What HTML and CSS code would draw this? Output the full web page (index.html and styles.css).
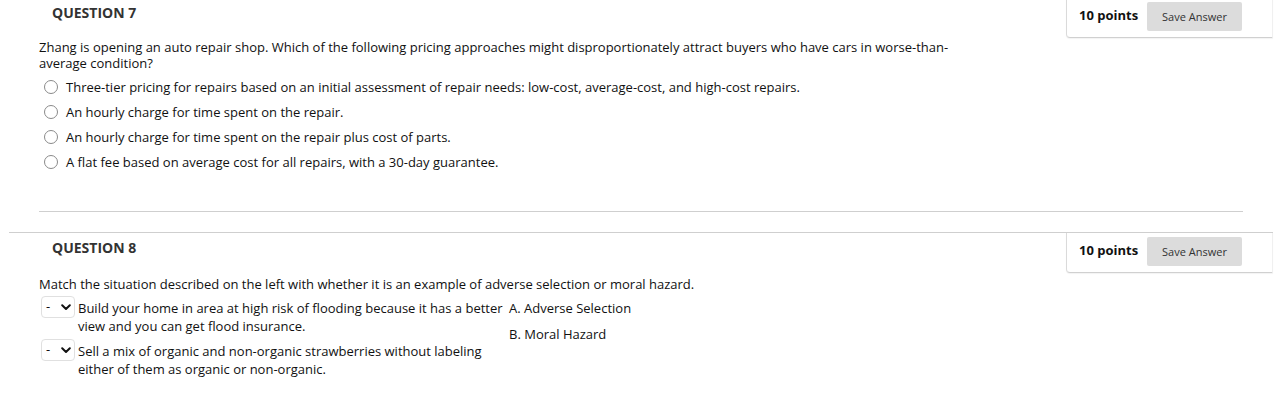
FILE: index.html
```html
<!DOCTYPE html>
<html>
<head>
<meta charset="utf-8">
<link rel="stylesheet" href="styles.css">
</head>
<body>
<div class="question q-first">
  <div class="q-head">
    <h3 class="q-title">QUESTION 7</h3>
    <div class="points-box">
      <span class="points">10 points</span>
      <button class="save">Save Answer</button>
    </div>
  </div>
  <div class="q-body">
    <p class="prompt">Zhang is opening an auto repair shop. Which of the following pricing approaches might disproportionately attract buyers who have cars in worse-than-average condition?</p>
    <ul class="options">
      <li><span class="radio"></span>Three-tier pricing for repairs based on an initial assessment of repair needs: low-cost, average-cost, and high-cost repairs.</li>
      <li><span class="radio"></span>An hourly charge for time spent on the repair.</li>
      <li><span class="radio"></span>An hourly charge for time spent on the repair plus cost of parts.</li>
      <li><span class="radio"></span>A flat fee based on average cost for all repairs, with a 30-day guarantee.</li>
    </ul>
    <div class="separator"></div>
  </div>
</div>
<div class="question">
  <div class="q-head">
    <h3 class="q-title">QUESTION 8</h3>
    <div class="points-box">
      <span class="points">10 points</span>
      <button class="save">Save Answer</button>
    </div>
  </div>
  <div class="q-body">
    <p class="prompt prompt-match">Match the situation described on the left with whether it is an example of adverse selection or moral hazard.</p>
    <div class="match">
      <div class="match-left">
        <div class="match-row">
          <div class="fake-select"><span class="dash">-</span><svg class="chev" width="10" height="7" viewBox="0 0 10 7"><path d="M1.2 1.3 L5 5 L8.8 1.3" fill="none" stroke="#111" stroke-width="2" stroke-linecap="round" stroke-linejoin="round"/></svg></div>
          <div class="match-text">Build your home in area at high risk of flooding because it has a better view and you can get flood insurance.</div>
        </div>
        <div class="match-row">
          <div class="fake-select"><span class="dash">-</span><svg class="chev" width="10" height="7" viewBox="0 0 10 7"><path d="M1.2 1.3 L5 5 L8.8 1.3" fill="none" stroke="#111" stroke-width="2" stroke-linecap="round" stroke-linejoin="round"/></svg></div>
          <div class="match-text">Sell a mix of organic and non-organic strawberries without labeling either of them as organic or non-organic.</div>
        </div>
      </div>
      <ul class="match-right">
        <li>A. Adverse Selection</li>
        <li>B. Moral Hazard</li>
      </ul>
    </div>
  </div>
</div>
</body>
</html>
```
FILE: styles.css
```css
html, body {
  margin: 0;
  padding: 0;
  background: #fff;
}
body {
  font-family: "Open Sans", "DejaVu Sans", sans-serif;
  font-size: 13px;
  color: #111;
}
.question {
  margin: 0 10px 0 9px;
  border-top: 1px solid #cfcfcf;
}
.q-first {
  margin-top: -3px;
}
.q-head {
  display: flex;
  justify-content: space-between;
  align-items: flex-start;
}
.q-title {
  margin: 0;
  padding: 5px 0 0 43px;
  font-size: 14px;
  font-weight: 700;
  color: #333;
  line-height: 20px;
}
.points-box {
  display: flex;
  align-items: center;
  gap: 10px;
  padding: 4px 30px 6px 12px;
  border-left: 1px solid #dadada;
  border-bottom: 1px solid #d0d0d0;
  border-right: 1px solid #f0f0f0;
  border-bottom-left-radius: 4px;
  box-shadow: 0 1px 1px rgba(0,0,0,0.05);
}
.points {
  font-weight: 700;
  font-size: 13px;
  color: #111;
  white-space: nowrap;
  width: 58px;
  margin-top: -4px;
}
.save {
  width: 95px;
  height: 29px;
  border: none;
  border-radius: 2px;
  background: #dcdcdc;
  color: #333;
  font-family: "Open Sans", "DejaVu Sans", sans-serif;
  font-size: 11px;
  padding: 0;
}
.q-body {
  padding: 0 0 0 30px;
}
.prompt {
  margin: 1px 0 0 0;
  width: 916px;
  line-height: 16px;
}
.prompt-match {
  margin-top: 3px;
}
.options {
  list-style: none;
  margin: 3px 0 0 0;
  padding: 0;
}
.options li {
  display: flex;
  align-items: center;
  height: 25px;
  line-height: 16px;
}
.radio {
  box-sizing: border-box;
  width: 14px;
  height: 14px;
  border: 1px solid #8a8a8a;
  border-radius: 50%;
  margin: 0 8px 0 5px;
  flex: none;
}
.separator {
  margin: 37px 30px 0 0;
  border-top: 1px solid #cfcfcf;
  height: 20px;
}
.match {
  display: flex;
  margin-top: 6px;
}
.match-left {
  width: 470px;
}
.match-row {
  display: flex;
  align-items: flex-start;
  margin-bottom: 6px;
}
.fake-select {
  box-sizing: border-box;
  width: 34px;
  height: 22px;
  border: 1px solid #e0e0e0;
  border-radius: 4px;
  display: flex;
  align-items: center;
  padding-left: 4px;
  margin: -2px 3px 0 2px;
  flex: none;
}
.dash {
  font-size: 13px;
  line-height: 1;
  margin-top: -2px;
}
.chev {
  margin-left: 11px;
}
.match-text {
  width: 430px;
  line-height: 18px;
  margin-top: 1px;
}
.match-right {
  list-style: none;
  margin: 0;
  padding: 0;
}
.match-right li {
  height: 25px;
  line-height: 18px;
  margin-top: 1px;
}
```
